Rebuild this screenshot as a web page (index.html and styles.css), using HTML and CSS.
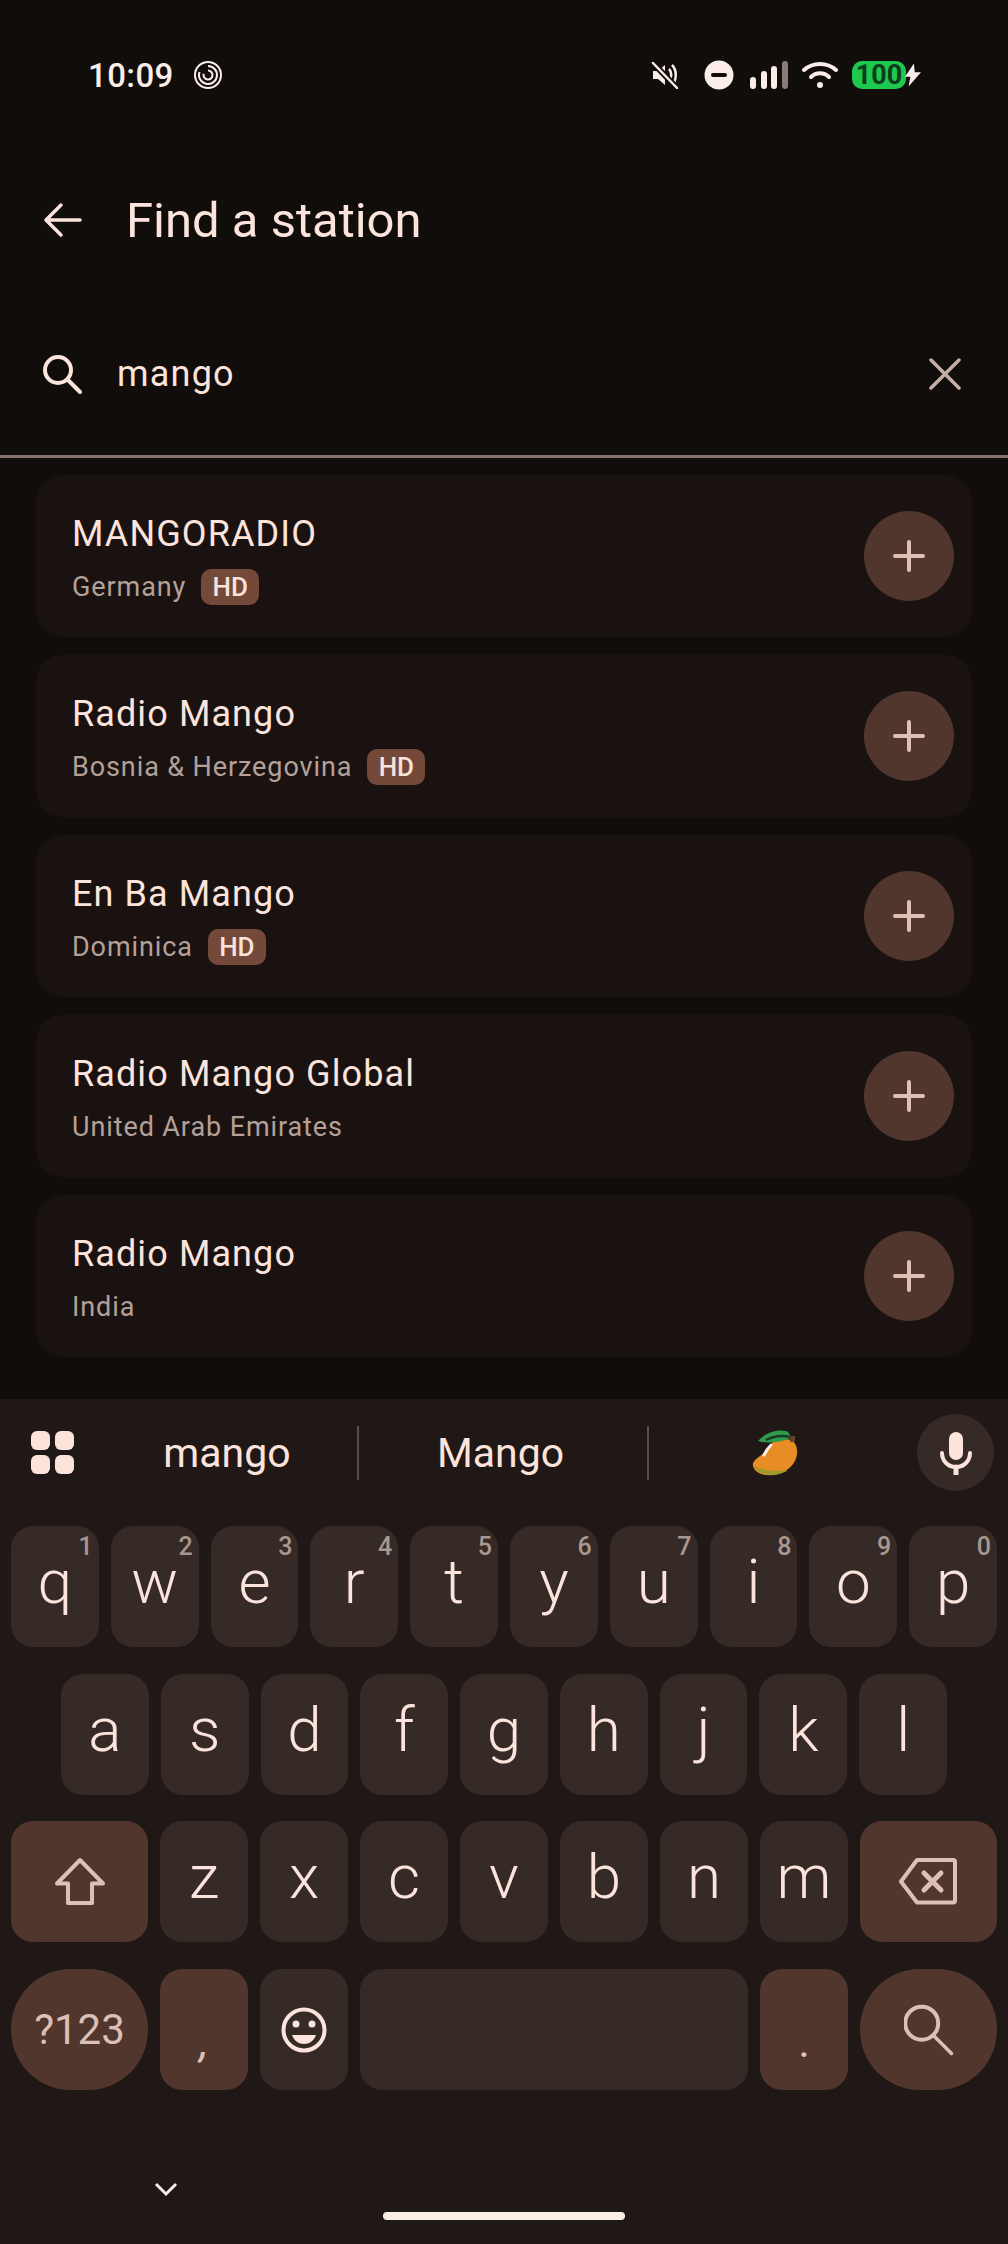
FILE: index.html
```html
<!DOCTYPE html>
<html lang="en">
  <head>
    <meta charset="UTF-8" />
    <meta name="viewport" content="width=device-width, initial-scale=1.0" />
    <title>Find a station</title>
    <link rel="stylesheet" href="styles.css">
  </head>
  <body>
    <div class="status-bar">
      <div class="status-left">
        <span class="clock">10:09</span>
        <svg class="spiral" width="30" height="30" viewBox="0 0 30 30" fill="none" stroke="#fbeee9" stroke-width="2">
          <circle cx="15" cy="15" r="13"/>
          <path d="M15 6a9 9 0 1 1-8.500 6M15 10.500a4.500 4.500 0 1 1-4.300 3.200"/>
        </svg>
      </div>
      <div class="status-right">
        <svg class="mute-icon" width="28" height="28" viewBox="0 0 28 28" fill="none">
          <path d="M2 10h5l7-6v20l-7-6H2z" fill="#fbeee9"/>
          <path d="M18 8c3 3 3 9 0 12M21 4c5 5 5 15 0 20" stroke="#fbeee9" stroke-width="2.500"/>
          <path d="M2 2l24 25" stroke="#110d0a" stroke-width="6"/>
          <path d="M2 2l24 25" stroke="#fbeee9" stroke-width="2.500" stroke-linecap="round"/>
        </svg>
        <svg class="dnd-icon" width="30" height="30" viewBox="0 0 30 30">
          <circle cx="15" cy="15" r="14.500" fill="#fbeee9"/>
          <rect x="7" y="13" width="16" height="4" rx="2" fill="#110d0a"/>
        </svg>
        <svg class="signal-icon" width="38" height="28" viewBox="0 0 38 28">
          <rect x="0" y="16" width="6" height="12" rx="3" fill="#fbeee9"/>
          <rect x="11" y="10" width="6" height="18" rx="3" fill="#fbeee9"/>
          <rect x="21" y="5" width="6" height="23" rx="3" fill="#fbeee9"/>
          <rect x="32" y="0" width="6" height="28" rx="3" fill="#8a7c76"/>
        </svg>
        <svg class="wifi-icon" width="36" height="28" viewBox="0 0 36 28" fill="none" stroke="#fbeee9" stroke-width="4" stroke-linecap="round">
          <path d="M2 9c9-8 23-8 32 0"/>
          <path d="M9 16c5-5 13-5 18 0"/>
          <circle cx="18" cy="24" r="3" fill="#fbeee9" stroke="none"/>
        </svg>
        <div class="battery">
          <span class="battery-level">100</span>
          <svg class="bolt" width="16" height="24" viewBox="0 0 18 26">
            <path d="M10 0L0 15h6l-2 11L18 10h-7z" fill="#fbeee9"/>
          </svg>
        </div>
      </div>
    </div>

    <div class="app-bar">
      <svg class="back-icon" width="40" height="36" viewBox="0 0 40 36" fill="none" stroke="#fce4dc" stroke-width="3.500" stroke-linecap="round" stroke-linejoin="round">
        <path d="M37 18H4M18 3L3 18l15 15"/>
      </svg>
      <h1 class="title">Find a station</h1>
    </div>

    <div class="search-row">
      <svg class="search-icon" width="40" height="40" viewBox="0 0 40 40" fill="none" stroke="#fce4dc" stroke-width="4" stroke-linecap="round">
        <circle cx="16" cy="16" r="13"/>
        <path d="M26 26l12 12"/>
      </svg>
      <span class="search-text">mango</span>
      <svg class="clear-icon" width="32" height="32" viewBox="0 0 32 32" fill="none" stroke="#c5b0a8" stroke-width="3.500" stroke-linecap="round">
        <path d="M2 2l28 28M30 2L2 30"/>
      </svg>
    </div>

    <div class="station-list">
      <div class="station-card">
        <div class="station-info">
          <div class="station-name">MANGORADIO</div>
          <div class="station-meta"><span class="country">Germany</span><span class="hd-badge">HD</span></div>
        </div>
        <div class="add-btn"><svg width="32" height="32" viewBox="0 0 32 32" stroke="#e0bfb5" stroke-width="4" stroke-linecap="round"><path d="M16 2v28M2 16h28"/></svg></div>
      </div>
      <div class="station-card">
        <div class="station-info">
          <div class="station-name">Radio Mango</div>
          <div class="station-meta"><span class="country">Bosnia &amp; Herzegovina</span><span class="hd-badge">HD</span></div>
        </div>
        <div class="add-btn"><svg width="32" height="32" viewBox="0 0 32 32" stroke="#e0bfb5" stroke-width="4" stroke-linecap="round"><path d="M16 2v28M2 16h28"/></svg></div>
      </div>
      <div class="station-card">
        <div class="station-info">
          <div class="station-name">En Ba Mango</div>
          <div class="station-meta"><span class="country">Dominica</span><span class="hd-badge">HD</span></div>
        </div>
        <div class="add-btn"><svg width="32" height="32" viewBox="0 0 32 32" stroke="#e0bfb5" stroke-width="4" stroke-linecap="round"><path d="M16 2v28M2 16h28"/></svg></div>
      </div>
      <div class="station-card">
        <div class="station-info">
          <div class="station-name">Radio Mango Global</div>
          <div class="station-meta"><span class="country">United Arab Emirates</span></div>
        </div>
        <div class="add-btn"><svg width="32" height="32" viewBox="0 0 32 32" stroke="#e0bfb5" stroke-width="4" stroke-linecap="round"><path d="M16 2v28M2 16h28"/></svg></div>
      </div>
      <div class="station-card">
        <div class="station-info">
          <div class="station-name">Radio Mango</div>
          <div class="station-meta"><span class="country">India</span></div>
        </div>
        <div class="add-btn"><svg width="32" height="32" viewBox="0 0 32 32" stroke="#e0bfb5" stroke-width="4" stroke-linecap="round"><path d="M16 2v28M2 16h28"/></svg></div>
      </div>
    </div>

    <div class="keyboard">
      <div class="suggestions">
        <svg class="apps-icon" width="44" height="44" viewBox="0 0 44 44" fill="#fce4dc">
          <rect x="0" y="0" width="19" height="19" rx="6"/>
          <rect x="24" y="0" width="19" height="19" rx="6"/>
          <rect x="0" y="24" width="19" height="19" rx="6"/>
          <rect x="24" y="24" width="19" height="19" rx="6"/>
        </svg>
        <div class="suggestion first">mango</div>
        <div class="suggestion-divider"></div>
        <div class="suggestion second">Mango</div>
        <div class="suggestion-divider"></div>
        <div class="suggestion third">
          <svg width="48" height="46" viewBox="0 0 48 46">
            <path d="M34 9c8 1 12 6 11 15-1 10-10 19-23 21-9 1-19-1-21-9-1-4 3-7 7-10 6-4 9-10 13-14 4-3 8-4 13-3z" fill="#e88d24"/>
            <path d="M2 36c2 6 11 9 20 9 6-1 10-2 14-5-10 2-24 1-34-4z" fill="#9c9a2c"/>
            <path d="M6 11C13 3 24-1 34 1c3 1 4 4 5 7-9 4-22 6-33 3z" fill="#2f9c4a"/>
            <path d="M14 10c8-4 16-5 24-3" stroke="#173a24" stroke-width="2.500" fill="none"/>
            <rect x="38" y="6" width="5" height="6" fill="#6b4028"/>
            <path d="M12 25c2-4 4-7 7-10" stroke="#fbeee9" stroke-width="3" stroke-linecap="round" fill="none"/>
          </svg>
        </div>
        <div class="mic-btn">
          <svg width="32" height="44" viewBox="0 0 32 44" fill="none">
            <rect x="9" y="1" width="14" height="28" rx="7" fill="#fce4dc"/>
            <path d="M2 22c0 8 6 14 14 14s14-6 14-14" stroke="#fce4dc" stroke-width="4" stroke-linecap="round"/>
            <path d="M16 36v7" stroke="#fce4dc" stroke-width="5" stroke-linecap="round"/>
          </svg>
        </div>
      </div>

      <div class="key-rows">
        <div class="key-row">
          <div class="key">q<span class="hint">1</span></div>
          <div class="key">w<span class="hint">2</span></div>
          <div class="key">e<span class="hint">3</span></div>
          <div class="key">r<span class="hint">4</span></div>
          <div class="key">t<span class="hint">5</span></div>
          <div class="key">y<span class="hint">6</span></div>
          <div class="key">u<span class="hint">7</span></div>
          <div class="key">i<span class="hint">8</span></div>
          <div class="key">o<span class="hint">9</span></div>
          <div class="key">p<span class="hint">0</span></div>
        </div>
        <div class="key-row middle">
          <div class="key">a</div>
          <div class="key">s</div>
          <div class="key">d</div>
          <div class="key">f</div>
          <div class="key">g</div>
          <div class="key">h</div>
          <div class="key">j</div>
          <div class="key">k</div>
          <div class="key">l</div>
        </div>
        <div class="key-row">
          <div class="key wide mod">
            <svg width="54" height="50" viewBox="0 0 54 50" fill="none" stroke="#dcbfb5" stroke-width="4" stroke-linejoin="round">
              <path d="M27 3L4 26.500h11V46h24V26.500h11z"/>
            </svg>
          </div>
          <div class="key">z</div>
          <div class="key">x</div>
          <div class="key">c</div>
          <div class="key">v</div>
          <div class="key">b</div>
          <div class="key">n</div>
          <div class="key">m</div>
          <div class="key wide mod">
            <svg width="60" height="50" viewBox="0 0 60 50" fill="none" stroke="#dcbfb5" stroke-width="4" stroke-linejoin="round" stroke-linecap="round">
              <path d="M18 3h36a2 2 0 0 1 2 2v38.500a2 2 0 0 1-2 2H18L2 24.500z"/>
              <path d="M25 16l17 17M42 16L25 33" stroke-width="5"/>
            </svg>
          </div>
        </div>
        <div class="key-row">
          <div class="key wide mod round sym">?123</div>
          <div class="key mod punct comma">,</div>
          <div class="key icon">
            <svg width="46" height="46" viewBox="0 0 46 46" fill="none">
              <circle cx="23" cy="23" r="20.500" stroke="#fce4dc" stroke-width="4"/>
              <circle cx="15" cy="17" r="3.500" fill="#fce4dc"/>
              <circle cx="31" cy="17" r="3.500" fill="#fce4dc"/>
              <path d="M11 28h24c-2 6-7 9-12 9s-10-3-12-9z" fill="#fce4dc"/>
            </svg>
          </div>
          <div class="key space"></div>
          <div class="key mod punct">.</div>
          <div class="key wide mod round">
            <svg width="50" height="52" viewBox="0 0 50 52" fill="none" stroke="#dcbfb5" stroke-width="4" stroke-linecap="round">
              <circle cx="17.700" cy="19.200" r="16.500"/>
              <path d="M29 31l18.500 18.500" stroke-width="3.500"/>
            </svg>
          </div>
        </div>
      </div>

      <div class="nav-area">
        <svg class="hide-icon" width="24" height="16" viewBox="0 0 24 16" fill="none" stroke="#fbeee9" stroke-width="3">
          <path d="M2 2l10 10L22 2"/>
        </svg>
        <div class="home-bar"></div>
      </div>
    </div>
  </body>
</html>
```

FILE: styles.css
```css
* {
  box-sizing: border-box;
}

html,
body {
  margin: 0;
  padding: 0;
}

body {
  width: 1008px;
  height: 2244px;
  overflow: hidden;
  display: flex;
  flex-direction: column;
  background-color: #110d0a;
  font-family: Roboto, "Liberation Sans", sans-serif;
  color: #fce4dc;
}

svg {
  display: block;
  flex: none;
}

/* Status bar */
.status-bar {
  height: 150px;
  padding: 0 88px 0 88px;
  display: flex;
  justify-content: space-between;
  align-items: center;
}

.status-left {
  display: flex;
  align-items: center;
  gap: 19px;
}

.clock {
  font-size: 33px;
  font-weight: 500;
  letter-spacing: 0.4px;
  color: #fbeee9;
}

.status-right {
  display: flex;
  align-items: center;
  margin-right: -1px;
}

.mute-icon {
  margin-right: 25px;
}

.dnd-icon {
  margin-right: 16px;
}

.signal-icon {
  margin-right: 14px;
}

.wifi-icon {
  margin-right: 14px;
}

.battery {
  display: flex;
  align-items: center;
}

.battery-level {
  width: 54px;
  height: 28px;
  border-radius: 10px;
  background-color: #1fc94f;
  color: #0d3d1c;
  font-size: 27px;
  font-weight: 700;
  line-height: 28px;
  text-align: center;
}

.bolt {
  margin-left: -1px;
}

/* App bar */
.app-bar {
  height: 140px;
  padding-left: 43px;
  display: flex;
  align-items: center;
  gap: 43px;
}

.title {
  margin: 0;
  font-size: 49px;
  font-weight: 400;
  color: #fce4dc;
}

/* Search */
.search-row {
  height: 168px;
  padding: 3px 47px 0 42px;
  display: flex;
  align-items: center;
  border-bottom: 3px solid #85736c;
}

.search-text {
  flex: 1;
  margin-left: 35px;
  font-size: 36px;
  letter-spacing: 1.2px;
  color: #fce4dc;
}

/* Station list */
.station-list {
  padding: 17px 36px 0;
  display: flex;
  flex-direction: column;
  gap: 18px;
  height: 941px;
}

.station-card {
  height: 162px;
  flex: none;
  padding: 0 18px 0 36px;
  display: flex;
  align-items: center;
  justify-content: space-between;
  background-color: #1a1210;
  border-radius: 26px;
}

.station-info {
  padding-top: 5px;
}

.station-name {
  font-size: 36px;
  letter-spacing: 1.1px;
  color: #fce4dc;
}

.station-meta {
  margin-top: 14px;
  height: 36px;
  display: flex;
  align-items: center;
  gap: 15px;
}

.country {
  font-size: 27px;
  letter-spacing: 0.9px;
  color: #b3a199;
}

.hd-badge {
  width: 58px;
  height: 36px;
  border-radius: 10px;
  background-color: #74493a;
  font-size: 26px;
  font-weight: 500;
  line-height: 36px;
  text-align: center;
  color: #f8e2da;
}

.add-btn {
  width: 90px;
  height: 90px;
  border-radius: 50%;
  background-color: #50362d;
  display: flex;
  align-items: center;
  justify-content: center;
}

/* Keyboard */
.keyboard {
  flex: 1;
  background-color: #201816;
  display: flex;
  flex-direction: column;
}

.suggestions {
  height: 127px;
  padding: 0 14px 20px 31px;
  display: flex;
  align-items: center;
}

.suggestion {
  font-size: 41px;
  text-align: center;
  color: #fce4dc;
}

.suggestion.first {
  width: 282px;
  padding-left: 22px;
}

.suggestion.second {
  width: 288px;
  padding-right: 5px;
}

.suggestion.third {
  width: 254px;
  display: flex;
  justify-content: center;
}

.suggestion-divider {
  width: 2px;
  height: 54px;
  background-color: #5a4c47;
}

.mic-btn {
  margin-left: auto;
  width: 77px;
  height: 77px;
  border-radius: 50%;
  background-color: #352a26;
  display: flex;
  align-items: center;
  justify-content: center;
}

.key-rows {
  padding: 0 11px;
  display: flex;
  flex-direction: column;
  gap: 26.7px;
}

.key-row {
  height: 121px;
  display: flex;
  gap: 12px;
}

.key-row.middle {
  padding: 0 50px;
}

.key {
  flex: 1;
  position: relative;
  padding-bottom: 10px;
  border-radius: 22px;
  background-color: #352a26;
  display: flex;
  align-items: center;
  justify-content: center;
  font-size: 62px;
  font-weight: 300;
  color: #fce4dc;
}

.key.wide {
  flex: 0 0 137px;
  padding-bottom: 0;
}

.key.icon {
  padding-bottom: 0;
}

.key.space {
  flex: 0 0 388px;
}

.key.mod {
  background-color: #50362d;
  color: #dcbfb5;
}

.key.round {
  border-radius: 60px;
}

.key.sym {
  font-size: 42px;
  font-weight: 400;
}

.key.punct {
  padding: 24px 0 0;
  font-size: 44px;
  font-weight: 400;
}

.key.comma {
  font-style: italic;
}

.hint {
  position: absolute;
  top: 6px;
  right: 6px;
  font-size: 25px;
  font-weight: 500;
  color: #a8978f;
}

.nav-area {
  flex: 1;
  position: relative;
}

.hide-icon {
  position: absolute;
  left: 154px;
  top: 92px;
}

.home-bar {
  position: absolute;
  left: 383px;
  top: 122px;
  width: 242px;
  height: 8px;
  border-radius: 4px;
  background-color: #fbeee9;
}
```
